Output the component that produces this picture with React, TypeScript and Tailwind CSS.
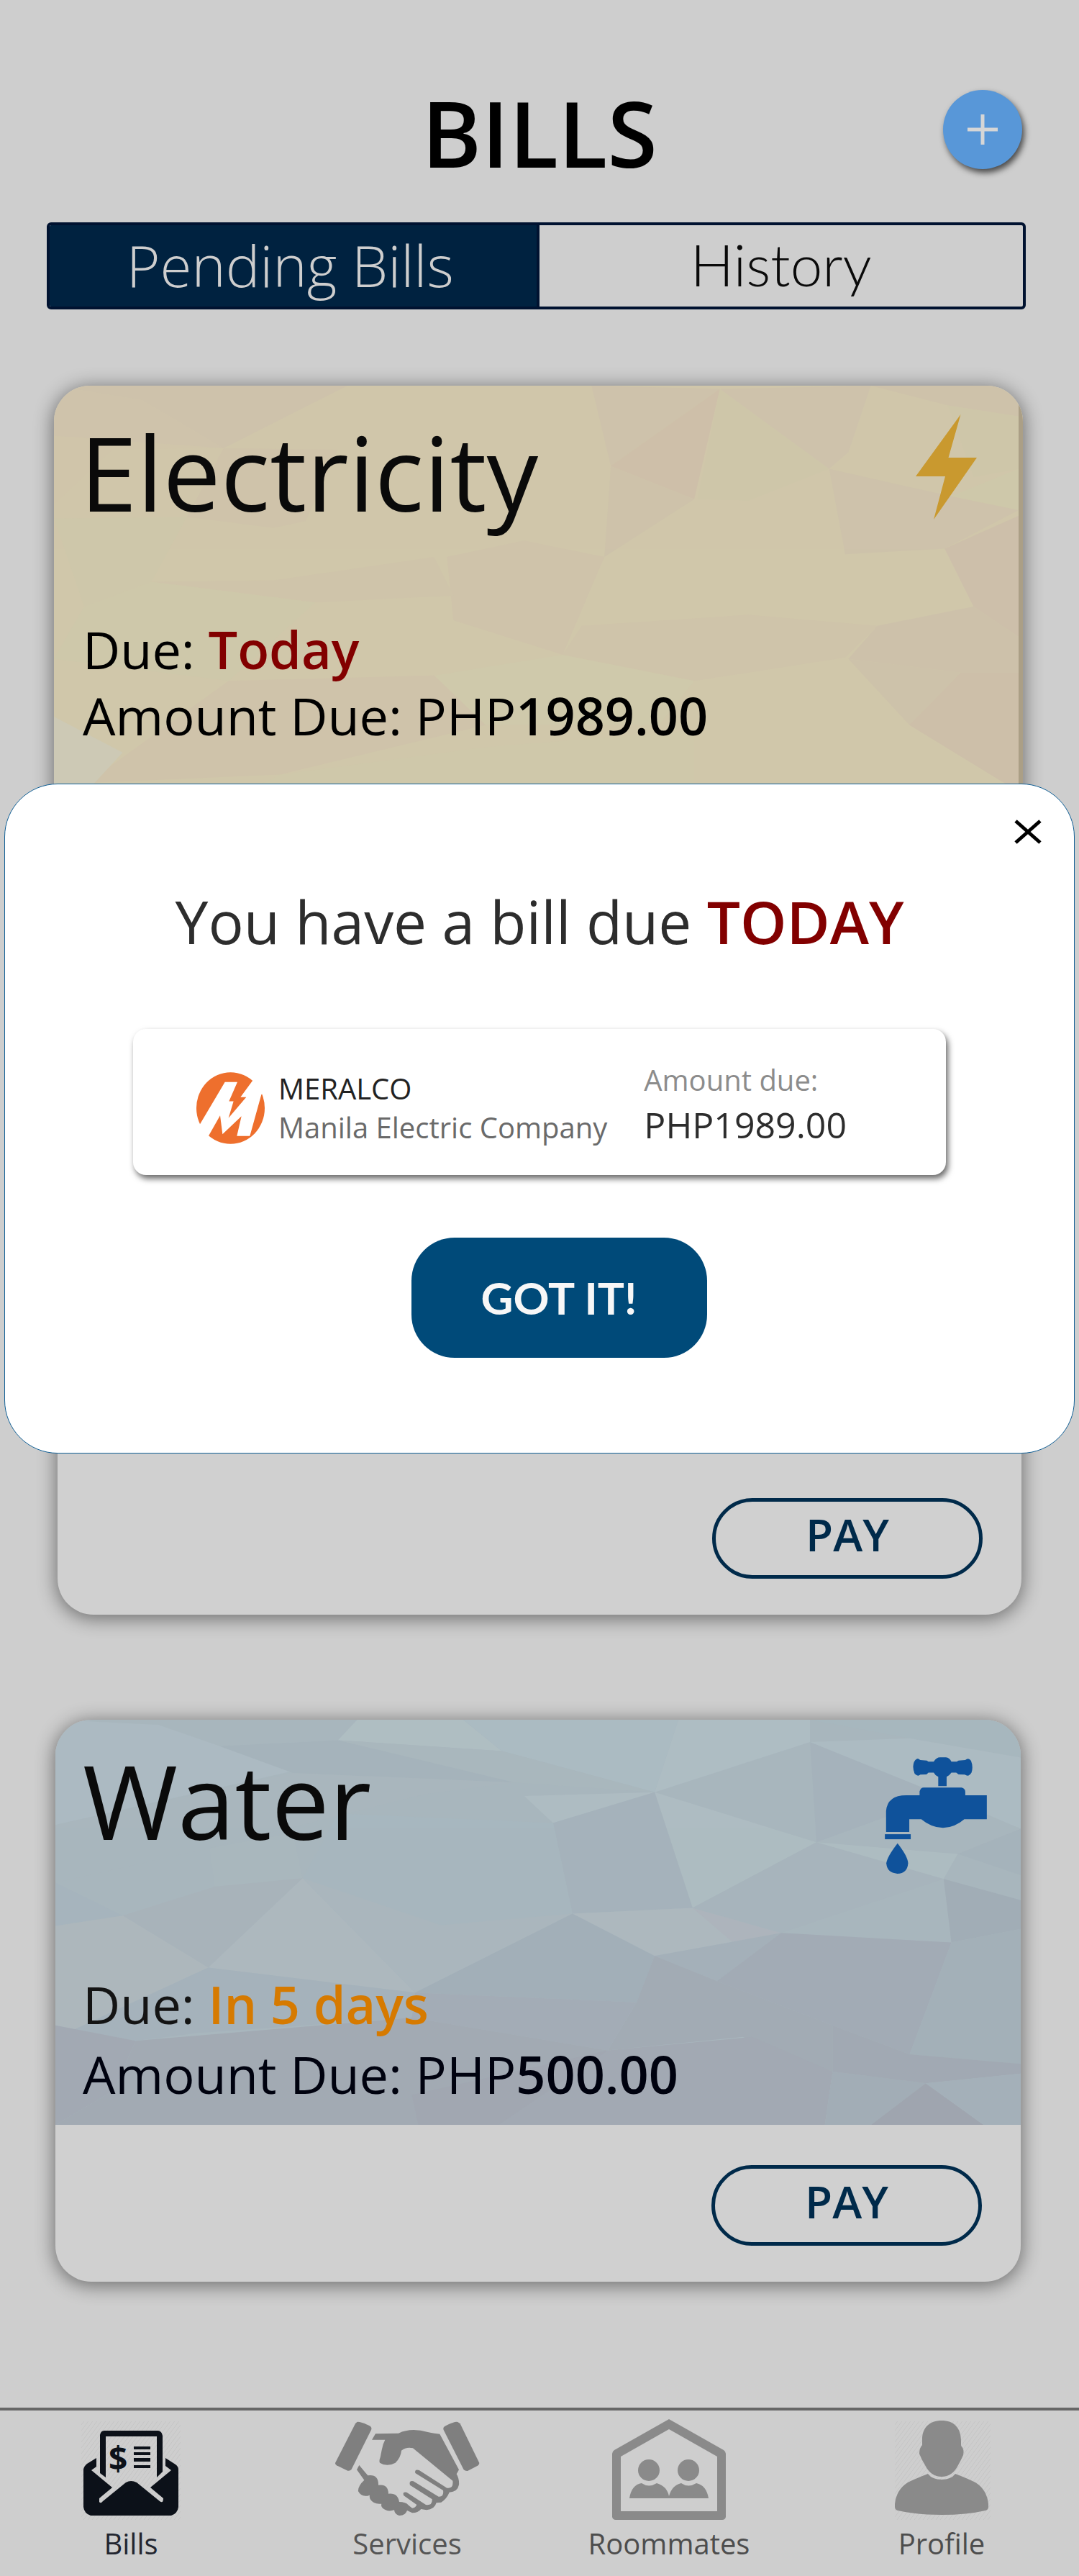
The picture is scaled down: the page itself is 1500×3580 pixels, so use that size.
import type { ReactNode } from "react";

type Facet = [points: string, fill: string];

const WARM_FACETS: Facet[] = [
  ["28,68 485,68 292,295 165,120", "#cdc0ab"],
  ["28,68 165,120 292,295 28,250", "#cfc2ac"],
  ["28,250 292,295 120,300 28,500", "#d0c5aa"],
  ["292,295 470,300 420,560 370,585 235,545", "#cfc2aa"],
  ["865,68 1065,80 895,360", "#cdc1ab"],
  ["1065,80 1025,480 895,360", "#cdbda9"],
  ["1065,80 1235,370 1110,485 1030,480", "#cdc7a9"],
  ["1065,80 1300,68 1265,310 1235,370", "#cdc1ac"],
  ["1300,68 1530,68 1530,180 1420,140", "#cec1aa"],
  ["1420,140 1530,180 1530,370 1460,400", "#cdc7a8"],
  ["1425,470 1530,370 1530,520", "#cec9aa"],
  ["895,360 1025,480 885,690", "#cdc1aa"],
  ["1235,370 1425,470 1530,520 1415,660 1260,680", "#cdc1ab"],
  ["1415,660 1530,540 1530,980 1460,870", "#ccbcaa"],
  ["640,690 760,630 885,690 820,1045 650,920", "#cfc2aa"],
  ["180,780 435,855 650,830 620,690 370,775", "#cfc4aa"],
  ["28,550 235,545 180,780 75,870", "#cec8aa"],
  ["75,870 180,780 435,855 300,1140 28,1060", "#cec9aa"],
  ["820,1045 1025,1140 1260,1055 1310,940 1110,900 850,940", "#cfc3aa"],
  ["1310,940 1460,870 1530,980 1530,1110 1440,1110 1265,1060", "#ccbfab"],
  ["1265,1060 1440,1110 1360,1300", "#cdc1aa"],
  ["1440,1110 1530,1110 1530,1539 1500,1500 1360,1300", "#ccbca9"],
  ["620,1120 820,1045 1025,1140 970,1300 700,1300", "#cfcaac"],
  ["300,1140 620,1120 700,1300 380,1480 80,1510", "#cfc2aa"],
  ["28,1270 135,1400 80,1539 28,1539", "#cccbba"],
  ["380,1480 700,1380 1025,1320 1025,1539 330,1539", "#cfc9aa"],
];

const COOL_FACETS: Facet[] = [
  ["30,57 190,70 285,125 470,110 400,190 30,330", "#acbbc2"],
  ["285,125 470,110 745,220 400,195", "#a5b3bb"],
  ["470,110 500,57 665,57 725,138", "#b0bfc3"],
  ["665,57 1000,57 963,245 725,138", "#abbcc2"],
  ["470,110 725,138 963,245 745,220", "#a9b7bd"],
  ["1000,57 1205,57 1205,115 963,245", "#aebec4"],
  ["1205,115 1420,250 1215,375", "#a5b2bb"],
  ["1205,57 1533,57 1533,155 1360,105", "#a7b7be"],
  ["1205,115 1360,105 1533,155 1533,340 1420,260", "#acbcc2"],
  ["760,255 963,245 805,325", "#aebdc2"],
  ["963,245 1215,375 1022,545", "#aebdc2"],
  ["805,325 963,245 1022,545 835,560", "#a5b2bb"],
  ["400,195 745,220 605,250 270,390 30,480 30,330", "#a9b6bd"],
  ["270,390 400,350 415,468 278,490", "#aab8bd"],
  ["415,468 470,300 805,325 835,560 630,590", "#a7b7bf"],
  ["30,480 135,565 30,592", "#a6b4bd"],
  ["135,565 278,490 415,468 268,700", "#a9b3ba"],
  ["268,700 415,468 590,765", "#aeb9bf"],
  ["415,468 630,590 835,560 590,765", "#abb7be"],
  ["30,592 135,565 268,700 60,860 30,850", "#aeb8bc"],
  ["835,560 1022,545 1160,610 963,670", "#aeb9bf"],
  ["1022,545 1160,610 1085,635", "#aeb4bc"],
  ["835,560 963,670 935,790 590,765", "#a2afb8"],
  ["963,670 1160,610 1060,735", "#a4b0b9"],
  ["1022,545 1215,375 1413,470 1160,610", "#a7b4bc"],
  ["1215,375 1435,405 1413,470", "#aebdc2"],
  ["1435,405 1533,340 1533,460", "#a5b3bb"],
  ["1413,470 1533,525 1533,600 1425,635", "#a1adb6"],
  ["1160,610 1425,635 1360,925 1240,850 1060,735", "#a2aab5"],
  ["1425,635 1533,600 1533,950 1360,925", "#a3b0b8"],
  ["268,700 590,765 585,830 250,870 155,890 60,860", "#a5b2bb"],
  ["963,670 1060,735 1240,850 1240,970 1100,880 890,915 935,790", "#a2aab4"],
  ["590,765 935,790 890,915 585,830", "#a3acb6"],
  ["30,850 155,890 120,1020 30,1108", "#a2a8b3"],
  ["155,890 585,830 890,915 720,1108 30,1108 120,1020", "#a2a9b3"],
  ["585,1030 890,915 900,1108 595,1108", "#a1a6b0"],
  ["890,915 1115,880 1240,970 1228,1108 720,1108", "#a2a8b2"],
  ["1240,970 1385,1000 1300,1108 1228,1108", "#a2adb6"],
  ["1385,1000 1475,1108 1300,1108", "#9fa4ae"],
  ["1240,850 1360,925 1533,950 1533,975 1385,1000 1240,970", "#a1a8b2"],
  ["1385,1000 1533,975 1533,1108 1475,1108", "#a4b0b9"],
];

function Facets({ facets, viewBox, className = "" }: { facets: Facet[]; viewBox: string; className?: string }) {
  return (
    <svg
      className={`absolute inset-0 h-full w-full ${className}`}
      viewBox={viewBox}
      preserveAspectRatio="none"
      aria-hidden="true"
    >
      {facets.map(([points, fill]) => (
        <polygon key={points} points={points} fill={fill} />
      ))}
    </svg>
  );
}

function BoltIcon() {
  return (
    <svg className="mr-[58px] h-[146px] w-[85px]" viewBox="0 0 85 146" fill="#c9992f" aria-hidden="true">
      <polygon points="62.5,0 45.5,60 85,60 25,146 41,86 0,86" />
    </svg>
  );
}

function FaucetIcon() {
  return (
    <svg className="mt-5 mr-[47px] h-[162px] w-[142px]" viewBox="150 125 426 487" fill="#0f529b" aria-hidden="true">
      <path d="M268 165Q270 135 288 131L298 137L325 139L332 144H354Q366 126 380 126H405Q420 128 428 144H450L458 139L486 137Q500 125 510 140Q520 165 512 190Q500 210 484 198L458 197L448 190H428Q420 202 408 207V246H373V207Q360 202 354 190H332L324 197L298 198Q288 208 275 195Q268 180 268 165Z" />
      <path d="M155 438V350Q160 284 240 284H295V268Q300 252 312 252H470Q486 256 486 270V284H576V384H482Q440 420 393 420Q345 420 302 384H252V438Z" />
      <rect x="150" y="447" width="108" height="21" />
      <path d="M203 485Q246 540 247 568Q244 612 202 612Q158 608 156 568Q160 540 203 485Z" />
    </svg>
  );
}

function MeralcoLogo() {
  return (
    <svg className="h-[100px] w-[95px] shrink-0" viewBox="69 82 285 299" role="img" aria-label="Meralco logo">
      <ellipse cx="211.5" cy="231.5" rx="142.5" ry="149.5" fill="#ee6f2d" />
      <polygon
        fill="#fff"
        points="85,297 188,123 240,123 205,203 224,203 203,273 277,186 253,186 302,119 325,100 356,160 340,175 292,348 238,348 257,265 178,340 168,262 120,347 80,381 60,330"
      />
    </svg>
  );
}

function Hatch({ id }: { id: string }) {
  return (
    <>
      <defs>
        <pattern id={id} width="6" height="8" patternUnits="userSpaceOnUse">
          <path d="M0 8L6 0" stroke="#bdbdbd" strokeWidth="1" />
        </pattern>
      </defs>
      <rect y="3" width="100%" height="137" fill={`url(#${id})`} opacity="0.6" />
    </>
  );
}

function BillsIcon() {
  return (
    <svg className="h-[141px] w-[138px]" viewBox="0 0 138 141" fill="#0c1119" aria-hidden="true">
      <Hatch id="hatch-bills" />
      <path d="M26 75V22Q27 16 32 16H107Q112 17 113 23V73L105 81V24H34V81Z" />
      <path d="M21 54V66L14 71L43 95L25 110V115Q27 118 30 114L62 88Q69 84 77 88L109 114Q114 118 114 110L96 95L125 71L117 65V54L131 63Q135 66 135 70V122Q134 131 125 134H13Q4 131 3 122V70Q4 65 8 62Z" />
      <text x="38" y="72" fontFamily="Open Sans, sans-serif" fontWeight="700" fontSize="46">$</text>
      <path d="M73 38H96V42H73ZM73 46H96V50H73ZM73 54H96V59H73ZM73 64H96V68H73Z" />
    </svg>
  );
}

function ServicesIcon() {
  return (
    <svg className="h-[143px] w-[202px]" viewBox="21 21 606 429" fill="#7f7f7f" aria-hidden="true">
      <path d="M115 33Q128 30 170 50Q178 56 174 66L92 230Q86 238 76 236L30 214Q22 208 25 202L108 40Z" />
      <path d="M535 33Q522 30 482 50Q472 56 476 66L560 232Q566 238 576 237L618 215Q627 209 624 202L545 40Z" />
      <path d="M192 82L288 80Q340 55 410 75Q440 82 460 83L540 232Q536 240 530 250Q542 270 540 295Q534 325 500 326Q490 352 466 368L446 370Q438 398 405 400L382 396Q370 412 345 412L324 402Q315 425 290 423Q272 418 270 400Q240 410 220 390Q214 382 217 374Q185 378 170 355Q166 345 168 338Q135 350 120 322Q118 300 145 275L114 232L124 213L160 256Q205 250 204 296Q245 290 246 332Q285 328 291 366Q318 366 330 380L345 392Q358 392 364 378L310 340Q302 322 322 326L402 378Q430 382 428 355L336 296Q330 276 350 280L455 344Q478 346 474 318L358 246Q354 228 374 234L490 308Q518 312 514 278L348 142Q320 136 300 152Q298 180 275 203Q240 222 210 203Q206 195 212 180L218 150Q222 125 232 107L177 107Z" />
    </svg>
  );
}

function RoommatesIcon() {
  return (
    <svg className="h-[140px] w-[158px]" viewBox="0 0 158 140" fill="#8a8a8a" aria-hidden="true">
      <path fillRule="evenodd" d="M79 0L155 43Q158 45 158 48V136Q157 140 153 140H5Q1 140 0 136V48Q0 45 3 43ZM79 14L12 52V128H146V52Z" />
      <circle cx="51" cy="71" r="15" />
      <circle cx="106" cy="71" r="15" />
      <path d="M24 110Q27 91 41 89Q51 96 62 89Q76 93 79 107Q83 92 96 89Q106 96 117 89Q131 92 134 110Z" />
    </svg>
  );
}

function ProfileIcon() {
  return (
    <svg className="h-[141px] w-[136px]" viewBox="-3 0 136 141" fill="#8a8a8a" aria-hidden="true">
      <Hatch id="hatch-profile" />
      <path d="M65 2C82 2 92 12 92 30V37Q97 42 95 50Q92 57 88 64Q80 80 65 80Q50 80 42 64Q37 56 34 48Q34 40 38 36V28C38 12 48 2 65 2Z" />
      <path d="M46 76Q52 84 65 84Q78 84 84 76Q100 82 112 88Q128 98 130 118V122Q130 126 126 127Q100 133 65 133Q30 133 4 127Q0 126 0 122V118Q2 98 18 88Q30 82 46 76Z" />
    </svg>
  );
}

function BillCard({
  className,
  header,
  payable = false,
}: {
  className: string;
  header?: ReactNode;
  payable?: boolean;
}) {
  return (
    <article
      className={`${className} flex h-[781px] flex-col overflow-hidden rounded-[50px] bg-[#d0d0d0] shadow-[0_4px_26px_2px_rgba(0,0,0,0.45)]`}
    >
      <div className="relative h-[563px]">{header}</div>
      {payable && (
        <div className="flex justify-end pt-14 pr-[54px]">
          <button
            type="button"
            className="h-[112px] w-[376px] rounded-[56px] border-[5px] border-[#002a4a] pb-3 text-[62px] leading-none font-semibold text-[#002a4a]"
          >
            PAY
          </button>
        </div>
      )}
    </article>
  );
}

const NAV_ITEMS = [
  { label: "Bills", icon: <BillsIcon />, className: "text-[#22252f]" },
  { label: "Services", icon: <ServicesIcon />, className: "text-[#555555]" },
  { label: "Roommates", icon: <RoommatesIcon />, className: "text-[#4d4d4d]" },
  { label: "Profile", icon: <ProfileIcon />, className: "pl-[26px] text-[#4d4d4d]" },
];

export default function App() {
  return (
    <div className="relative flex min-h-screen flex-col bg-[#cecece] font-['Open_Sans',sans-serif] text-black">
      <header className="grid grid-cols-[1fr_auto_1fr] items-center px-[79px] pt-[125px]">
        <h1 className="col-start-2 pt-2 text-[126px] leading-[102px] font-semibold">BILLS</h1>
        <button
          type="button"
          aria-label="Add bill"
          className="flex size-[110px] items-center justify-center justify-self-end rounded-full bg-[#5897d8] shadow-[3px_5px_8px_rgba(0,0,0,0.65)]"
        >
          <svg className="size-[42px]" viewBox="0 0 42 42" stroke="#d6d6d6" strokeWidth="5" aria-hidden="true">
            <path d="M21 0V42M0 21H42" />
          </svg>
        </button>
      </header>

      <div
        role="tablist"
        className="mt-[74px] mr-[74px] ml-[65px] grid grid-cols-2 overflow-hidden rounded-[6px] border-[4px] border-[#001230] text-[80px] leading-[113px] font-light"
      >
        <button type="button" role="tab" aria-selected="true" className="h-[113px] bg-[#002240] pr-2 pb-1 leading-[109px] text-[#cecece]">
          Pending Bills
        </button>
        <button
          type="button"
          role="tab"
          aria-selected="false"
          className="h-[113px] border-l-[4px] border-[#001230] pb-1 font-['Lato',sans-serif] leading-[109px] text-[#0a0a0a]"
        >
          History
        </button>
      </div>

      <main className="mt-[106px] flex flex-col gap-[146px]">
        <BillCard
          className="mr-[78px] ml-[75px]"
          header={
            <div className="h-full overflow-hidden border-r-[6px] border-[#ab9f86] bg-[#d0c7aa]">
              <div className="relative h-full pt-10 pl-9">
                <Facets facets={WARM_FACETS} viewBox="28 68 1502 1471" className="opacity-70" />
                <div className="relative flex h-40 items-start justify-between">
                  <h2 className="text-[143px] leading-[160px] text-[#0a0a0a]">Electricity</h2>
                  <BoltIcon />
                </div>
                <div className="relative mt-[120px] pl-1 text-[72px] leading-[92px]">
                  <p>
                    Due: <strong className="font-semibold text-[#820000]">Today</strong>
                  </p>
                  <p>
                    Amount Due: PHP<strong className="font-semibold">1989.00</strong>
                  </p>
                </div>
              </div>
            </div>
          }
        />
        <BillCard className="mx-20" payable />
        <BillCard
          className="mr-[81px] ml-[77px]"
          payable
          header={
            <div className="relative h-full bg-[#a8b6bd] pt-8 pl-[38px]">
              <Facets facets={COOL_FACETS} viewBox="30 57 1503 1051" className="opacity-90" />
              <div className="relative flex h-40 items-start justify-between">
                <h2 className="text-[143px] leading-[160px] text-[#0a0a0a]">Water</h2>
                <FaucetIcon />
              </div>
              <div className="relative mt-[155px] text-[72px] leading-[97px]">
                <p className="text-[#141414]">
                  Due: <strong className="font-semibold text-[#d67a00]">In 5 days</strong>
                </p>
                <p className="text-[#00020f]">
                  Amount Due: PHP<strong className="font-semibold">500.00</strong>
                </p>
              </div>
            </div>
          }
        />
      </main>

      <nav className="mt-auto grid grid-cols-[364fr_404fr_324fr_408fr] border-t-[4px] border-[#666666] pt-3 pb-[17px]">
        {NAV_ITEMS.map((item) => (
          <a key={item.label} href="#" className={`flex flex-col items-center text-[40px] leading-[56px] ${item.className}`}>
            <span className="h-[145px]">{item.icon}</span>
            {item.label}
          </a>
        ))}
      </nav>

      <section
        role="dialog"
        aria-label="Bill reminder"
        className="absolute inset-x-[6px] top-[1089px] flex flex-col rounded-[74px] border border-[#0f5f96] bg-white px-[178px] pt-[135px] pb-[132px]"
      >
        <button type="button" aria-label="Close" className="absolute top-[49px] right-[45px] p-0">
          <svg className="h-[34px] w-[38px]" viewBox="0 0 38 34" stroke="#000" strokeWidth="5" aria-hidden="true">
            <path d="M2 2L36 32M36 2L2 32" />
          </svg>
        </button>
        <h2 className="text-center text-[82px] leading-[110px] whitespace-nowrap text-[#2d2d2d]">
          You have a bill due <strong className="font-semibold text-[#820000]">TODAY</strong>
        </h2>
        <div className="mt-[95px] flex h-[203px] items-center justify-between rounded-[18px] bg-white pr-[138px] pl-[88px] shadow-[3px_5px_8px_rgba(0,0,0,0.6)]">
          <div className="flex items-center gap-[19px] pt-4">
            <MeralcoLogo />
            <div className="text-[40px] leading-[54px] whitespace-nowrap">
              <p className="text-[#222222]">MERALCO</p>
              <p className="text-[#6a6a6a]">Manila Electric Company</p>
            </div>
          </div>
          <div className="leading-[62px] whitespace-nowrap">
            <p className="text-[40px] text-[#8c8c8c]">Amount due:</p>
            <p className="text-[50px] text-[#2d2d2d]">PHP1989.00</p>
          </div>
        </div>
        <div className="mt-[87px] flex justify-center pl-[54px]">
          <button
            type="button"
            className="h-[167px] w-[411px] rounded-[60px] bg-[#004a79] font-['Lato',sans-serif] text-[62px] font-bold text-[#f7f7f7]"
          >
            GOT IT!
          </button>
        </div>
      </section>
    </div>
  );
}
